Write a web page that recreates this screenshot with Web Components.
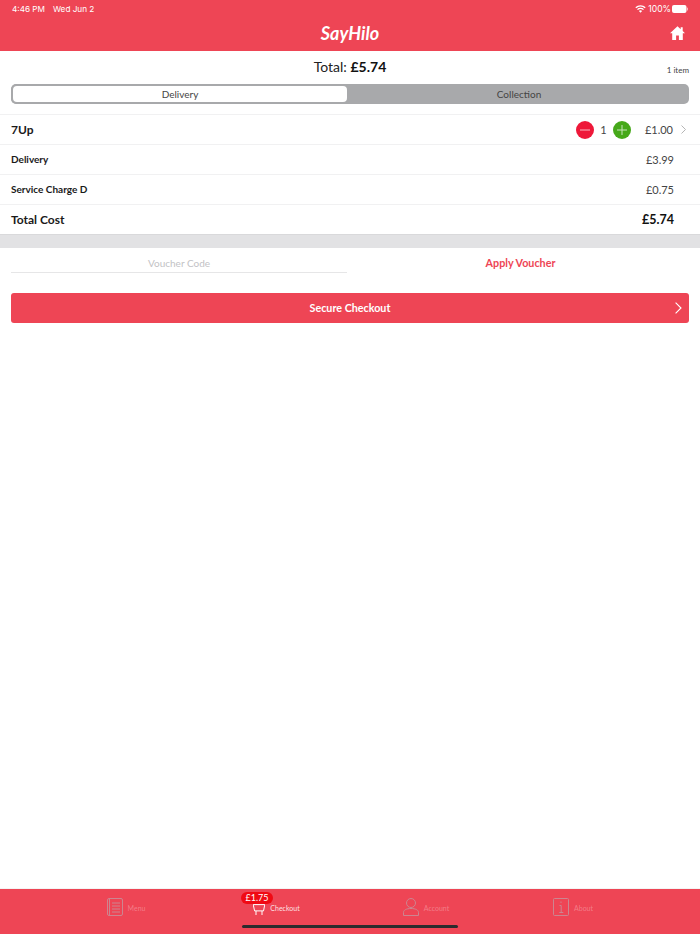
<!DOCTYPE html>
<html>
<head>
<meta charset="utf-8">
<title>SayHilo</title>
<style>
  html, body { margin: 0; height: 100%; background: #fff; }
  body { font-family: Lato, "Open Sans", sans-serif; }
</style>
</head>
<body>
<checkout-app></checkout-app>

<script>
const RED = "#ee4555";

function define(name, html) {
    customElements.define(name, class extends HTMLElement {
        constructor() {
            super();
            this.attachShadow({ mode: "open" }).innerHTML = html;
        }
    });
}

define("app-header", `
  <style>
    :host { display: block; height: 51px; background: ${RED}; color: #fff; }
    .status { height: 17px; padding: 1px 12px 0; box-sizing: border-box; display: flex; align-items: center; justify-content: space-between;
      font: 8.2px/16px Inter, sans-serif; }
    .status span + span { margin-left: 8px; }
    .right { display: flex; align-items: center; gap: 2px; }
    .right span { font-size: 8.6px; margin-right: -1px; }
    .bar { height: 34px; display: flex; align-items: center; justify-content: center; position: relative; }
    .logo { font: italic 700 18px Lato, sans-serif; margin-top: -2px; }
    .home { position: absolute; right: 15px; top: 9px; }
  </style>
  <div class="status">
    <div><span>4:46 PM</span><span>Wed Jun 2</span></div>
    <div class="right">
      <svg width="11" height="8" viewBox="0 0 11 8" fill="none" stroke="#fff" stroke-width="1.3">
        <path d="M.8 2.8a6.6 6.6 0 0 1 9.4 0M2.5 4.6a4.2 4.2 0 0 1 6 0"/>
        <path d="M5.5 7.8 3.9 6.1a2.2 2.2 0 0 1 3.2 0z" fill="#fff" stroke="none"/>
      </svg>
      <span>100%</span>
      <svg width="16" height="8" viewBox="0 0 16 8"><rect width="14.5" height="8" rx="2" fill="#fff"/><rect x="15" y="2.5" width="1" height="3" rx=".5" fill="#fff" opacity=".6"/></svg>
    </div>
  </div>
  <div class="bar">
    <span class="logo">SayHilo</span>
    <svg class="home" width="15" height="14" viewBox="0 0 15 14" fill="#fff">
      <path d="M7.5 .3 0 7.2h2.2V14h3.9V9.4h2.8V14h3.9V7.2H15L12.7 5V1.2h-2v2z"/>
    </svg>
  </div>
`);

define("total-line", `
  <style>
    :host { display: block; height: 33px; position: relative; text-align: center; color: #222;
      font: 14px/32px Lato, sans-serif; }
    b { font-weight: 700; color: #111; }
    small { position: absolute; right: 11px; top: 3px; font-size: 8px; color: #444; }
  </style>
  Total: <b><slot></slot></b><small>1 item</small>
`);

define("order-tabs", `
  <style>
    :host { display: flex; height: 20px; margin: 0 11px; background: #a8a9ab; border-radius: 5px;
      font: 10px/20px Lato, sans-serif; color: #444; box-sizing: border-box; }
    div { flex: 1; text-align: center; }
    .on { flex: 0 0 338px; box-sizing: border-box; background: #fff; border: 2px solid #a8a9ab; border-radius: 6px;
      line-height: 16px; }
  </style>
  <div class="on">Delivery</div>
  <div>Collection</div>
`);

define("cost-row", `
  <style>
    :host { display: flex; align-items: center; justify-content: space-between; height: 30px; box-sizing: border-box;
      padding: 0 26px 1px 11px; border-bottom: 1px solid #f1f1f2; font: 700 10px Lato, sans-serif; color: #1a1a1a; }
    :host([strong]) { font-size: 12px; height: 29px; border-bottom: 0; }
    .price { font-weight: 400; font-size: 11px; color: #444; }
    :host([strong]) .price { font-weight: 700; font-size: 12.5px; color: #111; }
  </style>
  <slot></slot>
  <span class="price"><slot name="price"></slot></span>
`);

define("item-row", `
  <style>
    :host { display: flex; align-items: center; height: 31px; box-sizing: border-box; padding: 0 14px 0 11px;
      border-top: 1px solid #f1f1f2; border-bottom: 1px solid #f1f1f2; font: 700 12px Lato, sans-serif; color: #1a1a1a; }
    .name { flex: 1; }
    .qty { width: 19px; text-align: center; font: 400 11px Lato, sans-serif; color: #444; }
    .price { width: 42px; text-align: right; font: 400 11px Lato, sans-serif; color: #444; }
    svg { display: block; }
    .chev { margin-left: 8px; }
  </style>
  <span class="name"><slot></slot></span>
  <svg width="18" height="18" viewBox="0 0 18 18"><circle cx="9" cy="9" r="9" fill="#ee1839"/><path d="M4 9h10" stroke="#fff" opacity=".7"/></svg>
  <span class="qty">1</span>
  <svg width="18" height="18" viewBox="0 0 18 18"><circle cx="9" cy="9" r="9" fill="#46a81a"/><path d="M4 9h10M9 4v10" stroke="#fff" opacity=".7"/></svg>
  <span class="price"><slot name="price"></slot></span>
  <svg class="chev" width="5" height="9" viewBox="0 0 5 9" fill="none" stroke="#b5b5b5"><path d="m.5.5 4 4-4 4"/></svg>
`);

define("voucher-form", `
  <style>
    :host { display: flex; height: 45px; padding: 0 11px; box-sizing: border-box; font: 10px Lato, sans-serif; }
    .code { flex: 0 0 336px; height: 25px; box-sizing: border-box; border-bottom: 1px solid #e6e6e7; text-align: center;
      color: #c2c2c5; line-height: 30px; }
    .apply { flex: 1; height: 25px; padding-left: 5px; text-align: center; line-height: 29px; color: ${RED}; font-weight: 700; font-size: 10.75px; }
  </style>
  <div class="code">Voucher Code</div>
  <div class="apply">Apply Voucher</div>
`);

define("checkout-button", `
  <style>
    :host { display: flex; align-items: center; justify-content: center; height: 30px; margin: 0 11px; padding-bottom: 1px;
      box-sizing: border-box; position: relative;
      background: ${RED}; border-radius: 3px; color: #fff; font: 700 10.75px Lato, sans-serif; }
    svg { position: absolute; right: 7px; top: 9px; }
  </style>
  <slot></slot>
  <svg width="7" height="12" viewBox="0 0 7 12" fill="none" stroke="#fff" stroke-width="1.1"><path d="m.6.6 5.4 5.4-5.4 5.4"/></svg>
`);

define("tab-item", `
  <style>
    :host { display: flex; align-items: center; justify-content: center; gap: 5px; flex: 0 0 150px; height: 36px; position: relative;
      font: 7px Lato, sans-serif; color: rgba(255,255,255,.3); }
    :host([active]) { color: rgba(255,255,255,.85); }
    :host(:last-child) { margin-left: -3px; }
    .label { margin-top: 2px; }
  </style>
  <slot name="icon"></slot><span class="label"><slot></slot></span>
`);

define("tab-bar", `
  <style>
    :host { display: block; height: 46px; background: ${RED}; border-top: 1px solid #f4f4f4; box-sizing: border-box; position: relative; }
    .tabs { display: flex; height: 36px; padding-left: 51px; }
    .indicator { position: absolute; left: 242px; top: 36px; width: 216px; height: 3px; border-radius: 2px; background: #2b2b2d; }
  </style>
  <div class="tabs"><slot></slot></div>
  <div class="indicator"></div>
`);

define("checkout-app", `
  <style>
    :host { display: flex; flex-direction: column; height: 934px; overflow: hidden; background: #fff; }
    .band { height: 14px; background: #e2e2e4; border-top: 1px solid #d9d9db; box-sizing: border-box; }
    .gap { height: 10px; }
    main { flex: 1; }
    .badge { position: absolute; left: 40px; top: 3px; padding: 0 4.5px; height: 12px; border-radius: 6px; background: #f00a14;
      color: #fff; font: 9px/12px Lato, sans-serif; }
    svg { display: block; }
    .off { stroke: #cc8590; }
    .cart { margin: 5px 0 0 1px; }
  </style>
  <app-header></app-header>
  <total-line>£5.74</total-line>
  <order-tabs></order-tabs>
  <div class="gap"></div>
  <item-row>7Up<span slot="price">£1.00</span></item-row>
  <cost-row>Delivery<span slot="price">£3.99</span></cost-row>
  <cost-row>Service Charge D<span slot="price">£0.75</span></cost-row>
  <cost-row strong>Total Cost<span slot="price">£5.74</span></cost-row>
  <div class="band"></div>
  <voucher-form></voucher-form>
  <checkout-button>Secure Checkout</checkout-button>
  <main></main>
  <tab-bar>
    <tab-item>
      <svg class="off" slot="icon" width="16" height="18" viewBox="0 0 16 18" fill="none"><rect x=".5" y=".5" width="15" height="17" rx="1.5"/><path d="M2.5 .5v17M5 5h8M5 8h8M5 11h8M5 14h8"/></svg>
      Menu
    </tab-item>
    <tab-item active>
      <svg class="cart" slot="icon" width="12" height="11" viewBox="0 0 12 11" fill="none" stroke="#fff"><path d="M.2.6h11.6l-1.3 6.3H1.6z"/><path d="M3 6.9V11M9 6.9V11"/></svg>
      Checkout
      <span class="badge">£1.75</span>
    </tab-item>
    <tab-item>
      <svg class="off" slot="icon" width="16" height="18" viewBox="0 0 16 18" fill="none"><circle cx="8" cy="5" r="4.5"/><path d="M.5 17.5v-3.2c0-2.2 3-3.8 7.5-3.8s7.5 1.6 7.5 3.8v3.2z"/></svg>
      Account
    </tab-item>
    <tab-item>
      <svg class="off" slot="icon" width="16" height="18" viewBox="0 0 16 18" fill="none"><rect x=".5" y=".5" width="15" height="17" rx="1"/><path d="M8 3.5v1.4M6.5 7.5H8.2v7M6.3 14.5h4"/></svg>
      About
    </tab-item>
  </tab-bar>
`);
</script>
</body>
</html>
